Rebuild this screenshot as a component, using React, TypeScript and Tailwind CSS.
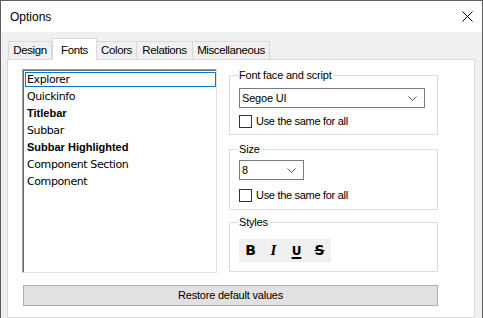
const ui = "font-['Liberation_Sans',Arial,sans-serif]";

const tabs = [
  { label: 'Design', w: 'w-[44px]' },
  { label: 'Fonts', w: 'w-[45px]', active: true },
  { label: 'Colors', w: 'w-[40px]' },
  { label: 'Relations', w: 'w-[56px]' },
  { label: 'Miscellaneous', w: 'w-[77px]' },
];

const fonts = [
  { label: 'Explorer' },
  { label: 'Quickinfo' },
  { label: 'Titlebar', bold: true },
  { label: 'Subbar' },
  { label: 'Subbar Highlighted', bold: true },
  { label: 'Component Section' },
  { label: 'Component' },
];

function Chevron() {
  return (
    <svg width="9" height="5" viewBox="0 0 9 5" className="shrink-0">
      <path d="M0.5 0.5 L4.5 4.5 L8.5 0.5" fill="none" stroke="#606060" strokeWidth="1" />
    </svg>
  );
}

function Combo({ value, width }: { value: string; width: string }) {
  return (
    <div
      className={`${width} h-[20px] border border-[#7a7a7a] bg-white flex items-center justify-between pl-[2px] pr-[7px] text-[11px] tracking-[-0.2px] text-black`}
    >
      <span>{value}</span>
      <Chevron />
    </div>
  );
}

function Check({ label }: { label: string }) {
  return (
    <div className="flex items-center gap-[4px] h-[13px] text-[11px] tracking-[-0.3px] text-black">
      <span className="w-[13px] h-[13px] border border-[#333333] bg-white shrink-0" />
      <span className="leading-[13px]">{label}</span>
    </div>
  );
}

function Group({
  title,
  className,
  children,
}: {
  title: string;
  className: string;
  children: React.ReactNode;
}) {
  return (
    <div className={`relative border border-[#dcdcdc] ${className}`}>
      <span className="absolute -top-[7px] left-[8px] bg-white px-px text-[11px] leading-[13px] tracking-[-0.2px] text-black">
        {title}
      </span>
      {children}
    </div>
  );
}

export default function App() {
  return (
    <div className={`w-[483px] h-[318px] overflow-hidden bg-[#f0f0f0] border-l border-r border-t border-[#5f5f5f] flex flex-col ${ui}`}>
      {/* title bar */}
      <div className="h-[31px] bg-white flex items-center justify-between pl-[9px] pr-[9px] shrink-0">
        <span className="text-[12px] text-black">Options</span>
        <svg width="11" height="11" viewBox="0 0 11 11">
          <path d="M0.5 0.5 L10.5 10.5 M10.5 0.5 L0.5 10.5" stroke="#000" strokeWidth="1" />
        </svg>
      </div>

      {/* tabs */}
      <div className="flex items-end ml-[7px] mt-[6px] h-[21px] shrink-0">
        {tabs.map((t) =>
          t.active ? (
            <div
              key={t.label}
              className={`${t.w} h-[22px] -mb-px z-10 bg-white border-l border-r border-t border-[#d9d9d9] flex items-start justify-center pt-[3px] text-[11.5px] tracking-[-0.4px] text-black`}
            >
              {t.label}
            </div>
          ) : (
            <div
              key={t.label}
              className={`${t.w} h-[18px] bg-[#f0f0f0] border-t border-r border-[#d9d9d9] first:border-l flex items-center justify-center text-[11.5px] tracking-[-0.4px] text-black`}
            >
              {t.label}
            </div>
          )
        )}
      </div>

      {/* tab page */}
      <div className="ml-[6px] w-[468px] flex-1 bg-white border border-[#d9d9d9] pt-[9px] pl-[14px]">
        <div className="flex gap-[12px]">
          {/* list of fonts */}
          <div className="w-[195px] h-[204px] bg-white border-t border-l border-[#a0a0a0] border-r border-b border-r-[#e3e3e3] border-b-[#e3e3e3] shadow-[inset_1px_1px_0_#696969] pt-px">
            {fonts.map((f, i) => (
              <div
                key={f.label}
                className={`ml-[2px] flex items-center text-black leading-none ${
                  i === 0 ? 'h-[15px] my-px border border-[#0078d7] pl-px' : 'h-[17px] pl-[2px]'
                } ${
                  f.bold
                    ? "font-bold text-[11px]"
                    : "text-[11px] tracking-[-0.4px] font-['DejaVu_Sans',sans-serif]"
                }`}
              >
                {f.label}
              </div>
            ))}
          </div>

          {/* settings column */}
          <div className="w-[209px] flex flex-col">
            <Group title="Font face and script" className="mt-[6px] pt-[12px] pb-[6px] pl-[9px]">
              <Combo value="Segoe UI" width="w-[186px]" />
              <div className="mt-[7px]">
                <Check label="Use the same for all" />
              </div>
            </Group>

            <Group title="Size" className="mt-[14px] pt-[10px] pb-[7px] pl-[9px]">
              <Combo value="8" width="w-[65px]" />
              <div className="mt-[9px]">
                <Check label="Use the same for all" />
              </div>
            </Group>

            <Group title="Styles" className="mt-[12px] pt-[16px] pb-[9px] pl-[9px]">
              <div className="flex w-[92px] h-[23px] bg-[#f0f0f0]">
                <span className="w-[23px] flex items-center justify-center text-[14px] font-bold text-black font-['DejaVu_Sans',sans-serif]">
                  B
                </span>
                <span className="w-[23px] flex items-center justify-center text-[15px] font-bold italic text-black font-['Liberation_Serif',serif]">
                  I
                </span>
                <span className="w-[23px] flex items-center justify-center text-[12px] font-bold underline underline-offset-2 decoration-2 text-black font-['DejaVu_Sans',sans-serif]">
                  U
                </span>
                <span className="w-[23px] flex items-center justify-center text-[14px] font-bold line-through text-black font-['DejaVu_Sans',sans-serif]">
                  S
                </span>
              </div>
            </Group>
          </div>
        </div>

        <button className="mt-[12px] ml-px w-[415px] h-[21px] bg-[#e1e1e1] border border-[#adadad] flex items-center justify-center text-[11px] tracking-[-0.2px] text-black">
          Restore default values
        </button>
      </div>
    </div>
  );
}
